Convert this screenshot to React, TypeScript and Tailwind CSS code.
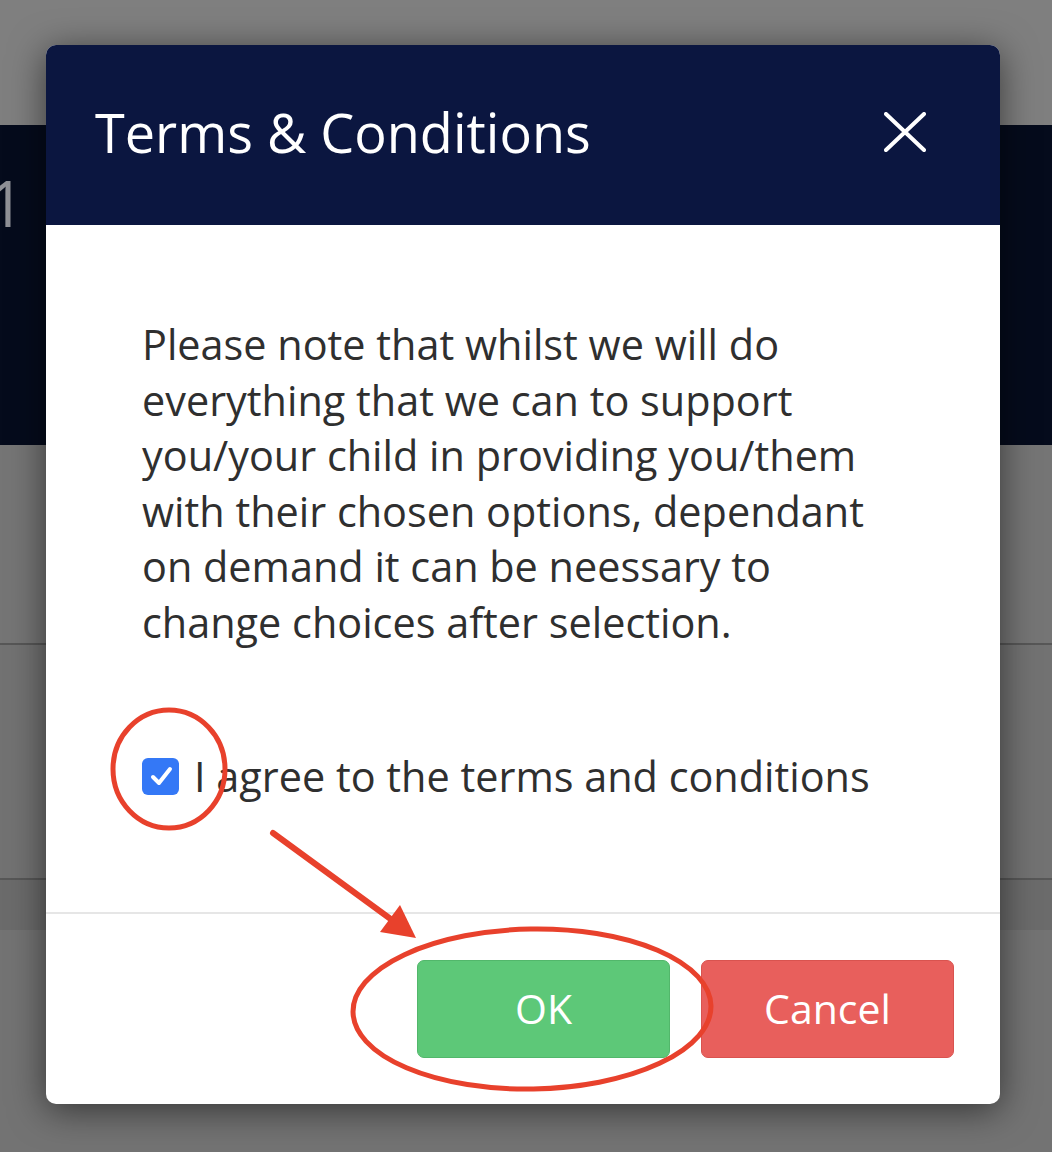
import { useState } from 'react';

const Annotations = () => (
  <svg
    className="pointer-events-none absolute left-0 top-0"
    width={1052}
    height={1152}
    viewBox="0 0 1052 1152"
  >
    <ellipse cx={169} cy={769} rx={56} ry={59} fill="none" stroke="#e8412c" strokeWidth={5} />
    <line x1={273} y1={833} x2={392} y2={920} stroke="#e8412c" strokeWidth={6} strokeLinecap="round" />
    <polygon points="416,938 380,932 400,905" fill="#e8412c" />
    <ellipse cx={532} cy={1009} rx={179} ry={80} fill="none" stroke="#e8412c" strokeWidth={5} transform="rotate(-1 532 1009)" />
  </svg>
);

const App = () => {
  const [agreed, setAgreed] = useState(true);

  return (
    <div className="relative h-[1152px] w-full overflow-hidden bg-[#737373] font-['Open_Sans',sans-serif]">
      {/* page behind the overlay */}
      <div className="h-[125px] bg-[#7f7f7f]" />
      <div className="flex h-[320px] items-start bg-[#050b1c] pt-[46px]">
        <span className="-ml-[12px] text-[64px] leading-none text-[#8f9096]">1</span>
      </div>
      <div className="h-[198px] bg-[#757575]" />
      <div className="h-[2px] bg-[#575757]" />
      <div className="h-[233px] bg-[#727272]" />
      <div className="h-[2px] bg-[#575757]" />
      <div className="h-[50px] bg-[#6b6b6b]" />

      {/* dialog */}
      <div className="absolute left-[46px] top-[45px] w-[954px] overflow-hidden rounded-[10px] bg-white shadow-[0_6px_36px_rgba(0,0,0,0.55)]">
        <div className="flex h-[180px] items-center justify-between bg-[#0b1640] pb-[6px] pl-[49px] pr-[74px]">
          <h2 className="text-[54px] leading-none text-white">Terms &amp; Conditions</h2>
          <button className="flex h-[42px] w-[42px] items-center justify-center" aria-label="Close">
            <svg width="42" height="40" viewBox="0 0 42 40">
              <path d="M2 2 L40 38 M40 2 L2 38" stroke="#ffffff" strokeWidth="4" strokeLinecap="round" />
            </svg>
          </button>
        </div>

        <div className="pb-[108px] pl-[96px] pr-[110px] pt-[92px] text-[#2f2f2f]">
          <p className="text-[41.4px] leading-[55.6px]">
            Please note that whilst we will do everything that we can to support you/your child in providing you/them
            with their chosen options, dependant on demand it can be neessary to change choices after selection.
          </p>
          <label className="mt-[98px] flex items-center gap-[15px]">
            <button
              type="button"
              onClick={() => setAgreed(!agreed)}
              className="flex h-[37px] w-[37px] shrink-0 items-center justify-center rounded-[6px] bg-[#3478f6]"
            >
              {agreed && (
                <svg width="24" height="22" viewBox="0 0 24 22">
                  <path d="M4 12 L10 18 L21 4" fill="none" stroke="#ffffff" strokeWidth="4" strokeLinecap="round" strokeLinejoin="round" />
                </svg>
              )}
            </button>
            <span className="whitespace-nowrap text-[41.4px] leading-[55.6px]">I agree to the terms and conditions</span>
          </label>
        </div>

        <div className="flex justify-end gap-[31px] border-t-2 border-[#e6e6e6] px-[46px] py-[46px]">
          <button className="h-[98px] w-[253px] rounded-[7px] border border-[#52b76b] bg-[#5dc878] text-[41px] text-white">
            OK
          </button>
          <button className="h-[98px] w-[253px] rounded-[7px] border border-[#d9534f] bg-[#e85f5c] text-[41px] text-white">
            Cancel
          </button>
        </div>
      </div>

      <Annotations />
    </div>
  );
};

export default App;
